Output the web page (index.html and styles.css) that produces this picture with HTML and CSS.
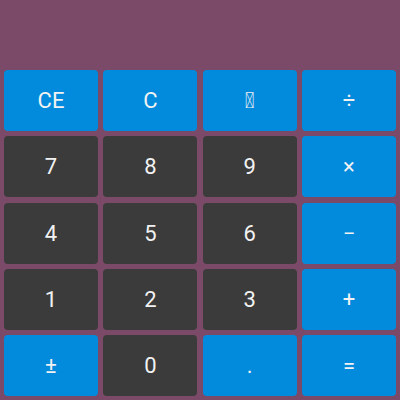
FILE: index.html
```html
<!DOCTYPE html>
<html lang="en">
<head>
<meta charset="utf-8">
<title>Calculator</title>
<link rel="stylesheet" href="styles.css">
</head>
<body>
<div class="calc">
  <div class="display"></div>
  <button class="key op">CE</button>
  <button class="key op">C</button>
  <button class="key op" aria-label="Backspace">&#xE000;</button>
  <button class="key op">÷</button>
  <button class="key num">7</button>
  <button class="key num">8</button>
  <button class="key num">9</button>
  <button class="key op">×</button>
  <button class="key num">4</button>
  <button class="key num">5</button>
  <button class="key num">6</button>
  <button class="key op">−</button>
  <button class="key num">1</button>
  <button class="key num">2</button>
  <button class="key num">3</button>
  <button class="key op">+</button>
  <button class="key op">±</button>
  <button class="key num">0</button>
  <button class="key op">.</button>
  <button class="key op">=</button>
</div>
</body>
</html>
```
FILE: styles.css
```css
html, body {
  margin: 0;
  padding: 0;
  width: 400px;
  height: 400px;
  background: #7b4a69;
  overflow: hidden;
}
.calc {
  box-sizing: border-box;
  width: 400px;
  height: 400px;
  padding: 4px;
  display: grid;
  grid-template-columns: repeat(4, 1fr);
  grid-template-rows: repeat(6, 1fr);
  gap: 5.33px;
}
.display {
  grid-column: 1 / -1;
}
.key {
  border: none;
  border-radius: 4px;
  margin: 0;
  padding: 0;
  font-family: Roboto, sans-serif;
  font-size: 22px;
  color: #f2f2f2;
  display: flex;
  align-items: center;
  justify-content: center;
}
.op {
  background: #028bdd;
}
.num {
  background: #3b3b3b;
}
```
